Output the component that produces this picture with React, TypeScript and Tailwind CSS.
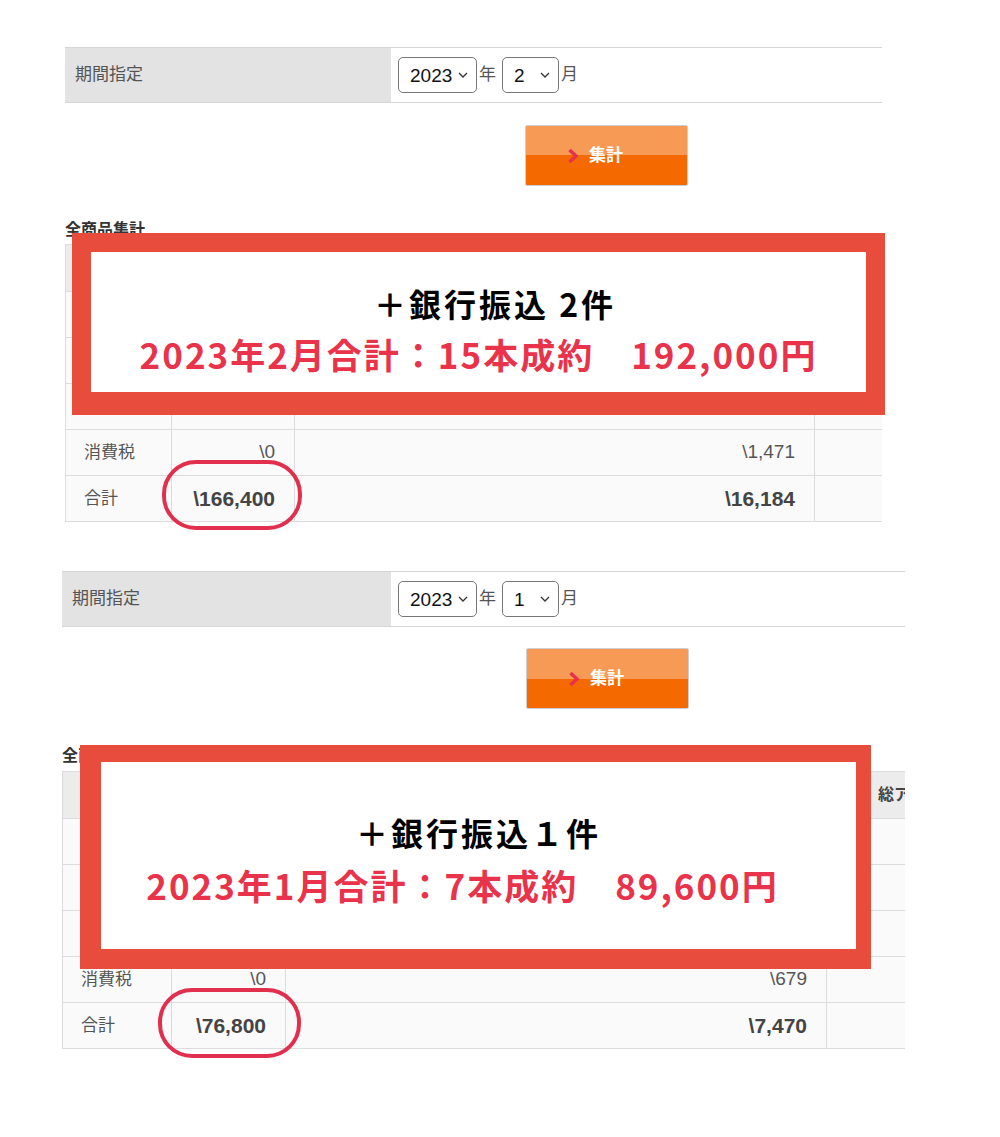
const uiFont = "font-['Liberation_Sans','Noto_Sans_CJK_JP',sans-serif]";
const noteFont = "font-['Noto_Sans_CJK_JP',sans-serif]";

type Row = { label: string; a: string; b: string; total?: boolean };

function Chevron() {
  return (
    <svg width="10" height="6" viewBox="0 0 10 6" fill="none">
      <path d="M1 1l4 4 4-4" stroke="#333" strokeWidth="1.3" />
    </svg>
  );
}

function FakeSelect({ value, w }: { value: string; w: string }) {
  return (
    <div className={`${w} h-[36px] border border-[#777] rounded-[5px] bg-white flex items-center justify-between pl-[11px] pr-[8px]`}>
      <span className="text-[19px] text-[#111] leading-none">{value}</span>
      <Chevron />
    </div>
  );
}

function PeriodRow({ labelW, month }: { labelW: string; month: string }) {
  return (
    <div className="flex h-[56px] border-y border-[#d6d6d6]">
      <div className={`${labelW} bg-[#e3e3e3] flex items-center pl-[10px] text-[17px] text-[#555]`}>期間指定</div>
      <div className="flex-1 bg-white flex items-center pl-[7px] text-[17px] text-[#555]">
        <FakeSelect value="2023" w="w-[79px]" />
        <span className="ml-[2px] mr-[6px]">年</span>
        <FakeSelect value={month} w="w-[57px]" />
        <span className="ml-[2px]">月</span>
      </div>
    </div>
  );
}

function SubmitButton() {
  return (
    <div className="w-[163px] h-[61px] border border-[#cfcfcf] rounded-[2px] bg-[linear-gradient(to_bottom,#f79a55_50%,#f56a00_50%)] flex items-center pl-[41px] gap-[10px]">
      <svg width="12" height="16" viewBox="0 0 12 16" fill="none">
        <path d="M2.5 2l6.5 6-6.5 6" stroke="#e8304a" strokeWidth="3.4" />
      </svg>
      <span className="text-[17px] font-bold text-white">集計</span>
    </div>
  );
}

function SummaryTable({ cols, rows }: { cols: string[]; rows: Row[] }) {
  return (
    <div className="w-max border-l border-t border-[#dcdcdc]">
      <div className="flex h-[47px] bg-[#ececec] border-b border-[#dcdcdc] text-[16px] font-bold text-[#444]">
        <div className={`${cols[0]} border-r border-[#dcdcdc]`} />
        <div className={`${cols[1]} border-r border-[#dcdcdc]`} />
        <div className={`${cols[2]} border-r border-[#dcdcdc]`} />
        <div className={`${cols[3]} flex items-center pl-[51px] whitespace-nowrap`}>総アクセス数</div>
      </div>
      {rows.map((r, i) => (
        <div key={i} className="flex h-[46px] bg-[#fafafa] border-b border-[#dcdcdc] text-[#555]">
          <div className={`${cols[0]} border-r border-[#dcdcdc] flex items-center pl-[18px] text-[17px]`}>{r.label}</div>
          <div className={`${cols[1]} border-r border-[#dcdcdc] flex items-center justify-end pr-[19px] ${r.total ? "text-[21px] font-semibold text-[#444]" : "text-[19px]"}`}>{r.a}</div>
          <div className={`${cols[2]} border-r border-[#dcdcdc] flex items-center justify-end pr-[19px] ${r.total ? "text-[21px] font-semibold text-[#444]" : "text-[19px]"}`}>{r.b}</div>
          <div className={cols[3]} />
        </div>
      ))}
    </div>
  );
}

// first three rows sit under the annotation boxes
const hidden: Row[] = [
  { label: "", a: "", b: "" },
  { label: "", a: "", b: "" },
  { label: "", a: "", b: "" },
];

const febRows: Row[] = [
  ...hidden,
  { label: "消費税", a: "\\0", b: "\\1,471" },
  { label: "合計", a: "\\166,400", b: "\\16,184", total: true },
];

const janRows: Row[] = [
  ...hidden,
  { label: "消費税", a: "\\0", b: "\\679" },
  { label: "合計", a: "\\76,800", b: "\\7,470", total: true },
];

export default function App() {
  return (
    <div className={`relative w-[1000px] h-[1137px] bg-white overflow-hidden ${uiFont}`}>
      {/* February */}
      <div className="pt-[47px] pl-[65px]">
        <div className="w-[817px] overflow-hidden">
          <PeriodRow labelW="w-[326px]" month="2" />
          <div className="mt-[22px] pl-[460px]">
            <SubmitButton />
          </div>
          <div className="mt-[34px] h-[20px] leading-[20px] text-[16px] font-bold text-[#333]">全商品集計</div>
          <div className="mt-[4px]">
            <SummaryTable cols={["w-[106px]", "w-[123px]", "w-[520px]", "w-[150px]"]} rows={febRows} />
          </div>
        </div>
      </div>

      {/* January */}
      <div className="mt-[49px] pl-[62px]">
        <div className="w-[843px] overflow-hidden">
          <PeriodRow labelW="w-[329px]" month="1" />
          <div className="mt-[21px] pl-[464px]">
            <SubmitButton />
          </div>
          <div className="mt-[37px] h-[20px] leading-[20px] text-[16px] font-bold text-[#333]">全商品集計</div>
          <div className="mt-[5px]">
            <SummaryTable cols={["w-[109px]", "w-[114px]", "w-[541px]", "w-[150px]"]} rows={janRows} />
          </div>
        </div>
      </div>

      {/* annotations */}
      <div className={`absolute left-[72px] top-[233px] w-[813px] h-[182px] bg-white border-[#e84c3d] border-t-[19px] border-l-[19px] border-r-[19px] border-b-[23px] flex flex-col items-center justify-center gap-[11px] pt-[12px] font-bold ${noteFont}`}>
        <div className="pl-[33px] text-[32px] leading-[40px] tracking-[3px] text-black">＋銀行振込 2件</div>
        <div className="text-[35px] leading-[40px] tracking-[2px] text-[#e8334a]">2023年2月合計：15本成約　192,000円</div>
      </div>
      <div className="absolute left-[162px] top-[460px] w-[140px] h-[70px] rounded-[34px] border-[4px] border-[#e0304e]" />

      <div className={`absolute left-[80px] top-[745px] w-[791px] h-[224px] bg-white border-[#e84c3d] border-t-[17px] border-l-[21px] border-r-[15px] border-b-[20px] flex flex-col items-center justify-center gap-[13px] pt-[6px] font-bold ${noteFont}`}>
        <div className="text-[32px] leading-[40px] tracking-[3px] text-black">＋銀行振込１件</div>
        <div className="pr-[32px] text-[35px] leading-[40px] tracking-[2px] text-[#e8334a]">2023年1月合計：7本成約　89,600円</div>
      </div>
      <div className="absolute left-[158px] top-[988px] w-[143px] h-[70px] rounded-[34px] border-[4px] border-[#e0304e]" />
    </div>
  );
}
